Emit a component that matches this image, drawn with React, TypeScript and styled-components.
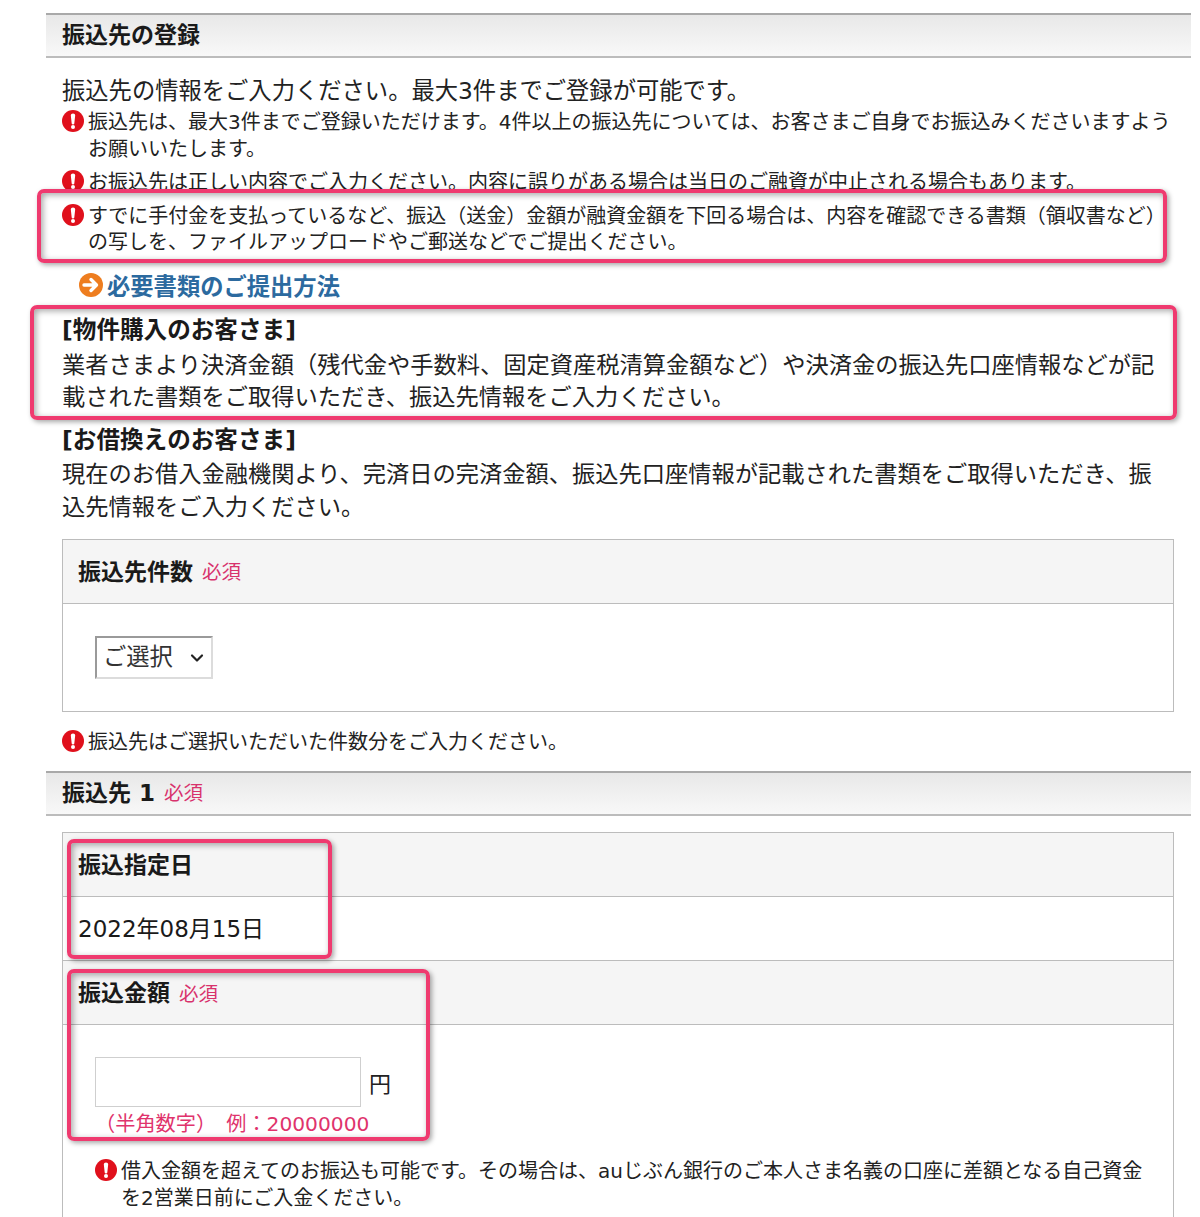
import React from "react";
import styled, { createGlobalStyle } from "styled-components";
import { ChevronDown } from "lucide-react";

const GlobalStyle = createGlobalStyle`
  html, body {
    margin: 0;
    padding: 0;
    background: #fff;
    overflow: hidden;
  }
  body {
    font-family: "DejaVu Sans", "Noto Sans CJK JP", sans-serif;
    color: #222;
  }
`;

const Page = styled.div`
  width: 1200px;
  height: 1217px;
  overflow: hidden;
  padding: 13px 9px 0 46px;
  box-sizing: border-box;
`;

const Bar = styled.h2`
  margin: 0;
  padding: 0 0 2px 16px;
  display: flex;
  align-items: center;
  box-sizing: content-box;
  height: 39px;
  border-top: 2px solid #a9a9a9;
  border-bottom: 2px solid #bcbcbc;
  background: linear-gradient(#e8e8e8, #f8f8f8);
  font-size: 23px;
  font-weight: 700;
  line-height: 32px;
  color: #1a1a1a;
`;

const Content = styled.div`
  width: 1112px;
  margin-left: 16px;
`;

const Intro = styled.p`
  margin: 17px 0 0;
  font-size: 23.3px;
  line-height: 32px;
  white-space: nowrap;
`;

const Notice = styled.div`
  display: flex;
  gap: 4px;
  margin-top: ${(p) => p.$top}px;
  margin-left: ${(p) => p.$left || 0}px;
  font-size: 20px;
  line-height: 26.5px;
  white-space: nowrap;
`;

const NoticeIcon = styled.svg`
  flex: none;
  width: 22px;
  height: 22px;
  margin-top: 1px;
`;

const Marked = styled.div`
  position: relative;

  &::after {
    content: "";
    position: absolute;
    inset: ${(p) => p.$inset};
    border: 4px solid #ef3a6f;
    border-radius: 7px;
    box-shadow: 2px 2px 5px rgba(0, 0, 0, 0.35),
      inset 2px 2px 6px rgba(0, 0, 0, 0.35);
    pointer-events: none;
    z-index: 1;
  }
`;

const MethodLink = styled.a`
  display: flex;
  align-items: center;
  gap: 4px;
  margin: 15px 0 11px 17px;
  font-size: 23.3px;
  font-weight: 700;
  line-height: 32px;
  color: #2c6a9f;
`;

const LinkIcon = styled.svg`
  width: 24px;
  height: 24px;
  margin-top: -4px;
`;

const GroupTitle = styled.h3`
  margin: 0;
  font-size: 23.6px;
  font-weight: 700;
  line-height: 32px;
  color: #1a1a1a;
`;

const Body = styled.p`
  margin: ${(p) => p.$top}px 0 0;
  font-size: 23.25px;
  line-height: ${(p) => p.$leading || 32}px;
  white-space: nowrap;
`;

const Group = styled.section`
  margin-top: ${(p) => p.$top}px;
`;

const Box = styled.div`
  border: 1px solid #bcbcbc;
  border-bottom: ${(p) => (p.$open ? "none" : "1px solid #bcbcbc")};
  padding-bottom: ${(p) => (p.$open ? 40 : 0)}px;
  margin-top: ${(p) => p.$top}px;
`;

const BoxHead = styled.div`
  display: flex;
  align-items: center;
  gap: 9px;
  height: 64px;
  box-sizing: border-box;
  padding: 0 0 3px 15px;
  background: #f5f5f5;
  border-bottom: 1px solid #bcbcbc;
  font-size: 23px;
  font-weight: 700;
  color: #1a1a1a;
`;

const Required = styled.span`
  font-size: 19.5px;
  font-weight: 400;
  color: #d8326c;
  margin-top: 2px;
  margin-left: ${(p) => p.$gap || 0}px;
`;

const BoxBody = styled.div`
  padding: 32px;
`;

const SelectWrap = styled.div`
  position: relative;
  width: 118px;
  height: 43px;

  svg {
    position: absolute;
    top: 12px;
    right: 6px;
    color: #222;
    pointer-events: none;
  }
`;

const CountSelect = styled.select`
  display: block;
  appearance: none;
  width: 100%;
  height: 100%;
  padding: 0 4px 2px 6px;
  background: #fff;
  border-style: solid;
  border-width: 2px;
  border-color: #9a9a9a #dcdcdc #dcdcdc #9a9a9a;
  border-radius: 0;
  font-family: inherit;
  font-size: 23.3px;
  color: #333;
`;

const DateRow = styled.div`
  height: 64px;
  box-sizing: border-box;
  padding: 0 0 3px 15px;
  display: flex;
  align-items: center;
  border-bottom: 1px solid #bcbcbc;
  font-size: 23px;
  color: #1a1a1a;
`;

const AmountBody = styled.div`
  padding: 32px 32px 0;
  height: 115px;
  box-sizing: border-box;
`;

const AmountRow = styled.div`
  display: flex;
  align-items: center;
  gap: 8px;
  font-size: 22px;
`;

const AmountInput = styled.input`
  width: 266px;
  height: 50px;
  box-sizing: border-box;
  border: 1px solid #cfcfcf;
  background: #fff;
`;

const Hint = styled.div`
  margin-top: 3px;
  font-size: 20.2px;
  line-height: 28px;
  color: #e0336c;
  white-space: pre;
`;

const Alert = () => (
  <NoticeIcon viewBox="0 0 22 22">
    <circle cx="11" cy="11" r="11" fill="#e0101c" />
    <path d="M8.8 5.2a2.2 1.8 0 0 1 4.4 0l-.9 8.2a1.3 1 0 0 1-2.6 0z" fill="#fff" />
    <circle cx="11" cy="17" r="2" fill="#fff" />
  </NoticeIcon>
);

const Arrow = () => (
  <LinkIcon viewBox="0 0 24 24">
    <circle cx="12" cy="12" r="12" fill="#ee7d1f" />
    <path
      d="M5 12h12M12 6.5l5.5 5.5L12 17.5"
      fill="none"
      stroke="#fff"
      strokeWidth="3.4"
      strokeLinecap="round"
      strokeLinejoin="round"
    />
  </LinkIcon>
);

function App() {
  return (
    <Page>
      <GlobalStyle />
      <Bar>振込先の登録</Bar>
      <Content>
        <Intro>振込先の情報をご入力ください。最大3件までご登録が可能です。</Intro>
        <Notice $top={2}>
          <Alert />
          <div>
            振込先は、最大3件までご登録いただけます。4件以上の振込先については、お客さまご自身でお振込みくださいますよう
            <br />
            お願いいたします。
          </div>
        </Notice>
        <Notice $top={7}>
          <Alert />
          <div>お振込先は正しい内容でご入力ください。内容に誤りがある場合は当日のご融資が中止される場合もあります。</div>
        </Notice>
        <Marked $inset="-14px 7px -7px -25px">
          <Notice $top={7}>
            <Alert />
            <div>
              すでに手付金を支払っているなど、振込（送金）金額が融資金額を下回る場合は、内容を確認できる書類（領収書など）
              <br />
              の写しを、ファイルアップロードやご郵送などでご提出ください。
            </div>
          </Notice>
        </Marked>
        <MethodLink>
          <Arrow />
          必要書類のご提出方法
        </MethodLink>
        <Marked $inset="-9px -3px -7px -32px">
          <GroupTitle>[物件購入のお客さま]</GroupTitle>
          <Body $top={3}>
            業者さまより決済金額（残代金や手数料、固定資産税清算金額など）や決済金の振込先口座情報などが記
            <br />
            載された書類をご取得いただき、振込先情報をご入力ください。
          </Body>
        </Marked>
        <Group $top={11}>
          <GroupTitle>[お借換えのお客さま]</GroupTitle>
          <Body $top={1} $leading={33}>
            現在のお借入金融機関より、完済日の完済金額、振込先口座情報が記載された書類をご取得いただき、振
            <br />
            込先情報をご入力ください。
          </Body>
        </Group>
        <Box $top={16}>
          <BoxHead>
            振込先件数<Required>必須</Required>
          </BoxHead>
          <BoxBody>
            <SelectWrap>
              <CountSelect defaultValue="">
                <option value="">ご選択</option>
                <option value="1">1件</option>
                <option value="2">2件</option>
                <option value="3">3件</option>
              </CountSelect>
              <ChevronDown size={20} strokeWidth={2.6} />
            </SelectWrap>
          </BoxBody>
        </Box>
        <Notice $top={17}>
          <Alert />
          <div>振込先はご選択いただいた件数分をご入力ください。</div>
        </Notice>
      </Content>
      <Group $top={16}>
        <Bar>
          振込先 1<Required $gap={9}>必須</Required>
        </Bar>
      </Group>
      <Content>
        <Box $top={16} $open>
          <Marked $inset="6px 841px 2px 4px">
            <BoxHead>振込指定日</BoxHead>
            <DateRow>2022年08月15日</DateRow>
          </Marked>
          <Marked $inset="8px 743px -1px 4px">
            <BoxHead>
              振込金額<Required>必須</Required>
            </BoxHead>
            <AmountBody>
              <AmountRow>
                <AmountInput type="text" />円
              </AmountRow>
              <Hint>（半角数字）　例：20000000</Hint>
            </AmountBody>
          </Marked>
          <Notice $top={18} $left={32}>
            <Alert />
            <div>
              借入金額を超えてのお振込も可能です。その場合は、auじぶん銀行のご本人さま名義の口座に差額となる自己資金
              <br />
              を2営業日前にご入金ください。
            </div>
          </Notice>
        </Box>
      </Content>
    </Page>
  );
}

export default App;
